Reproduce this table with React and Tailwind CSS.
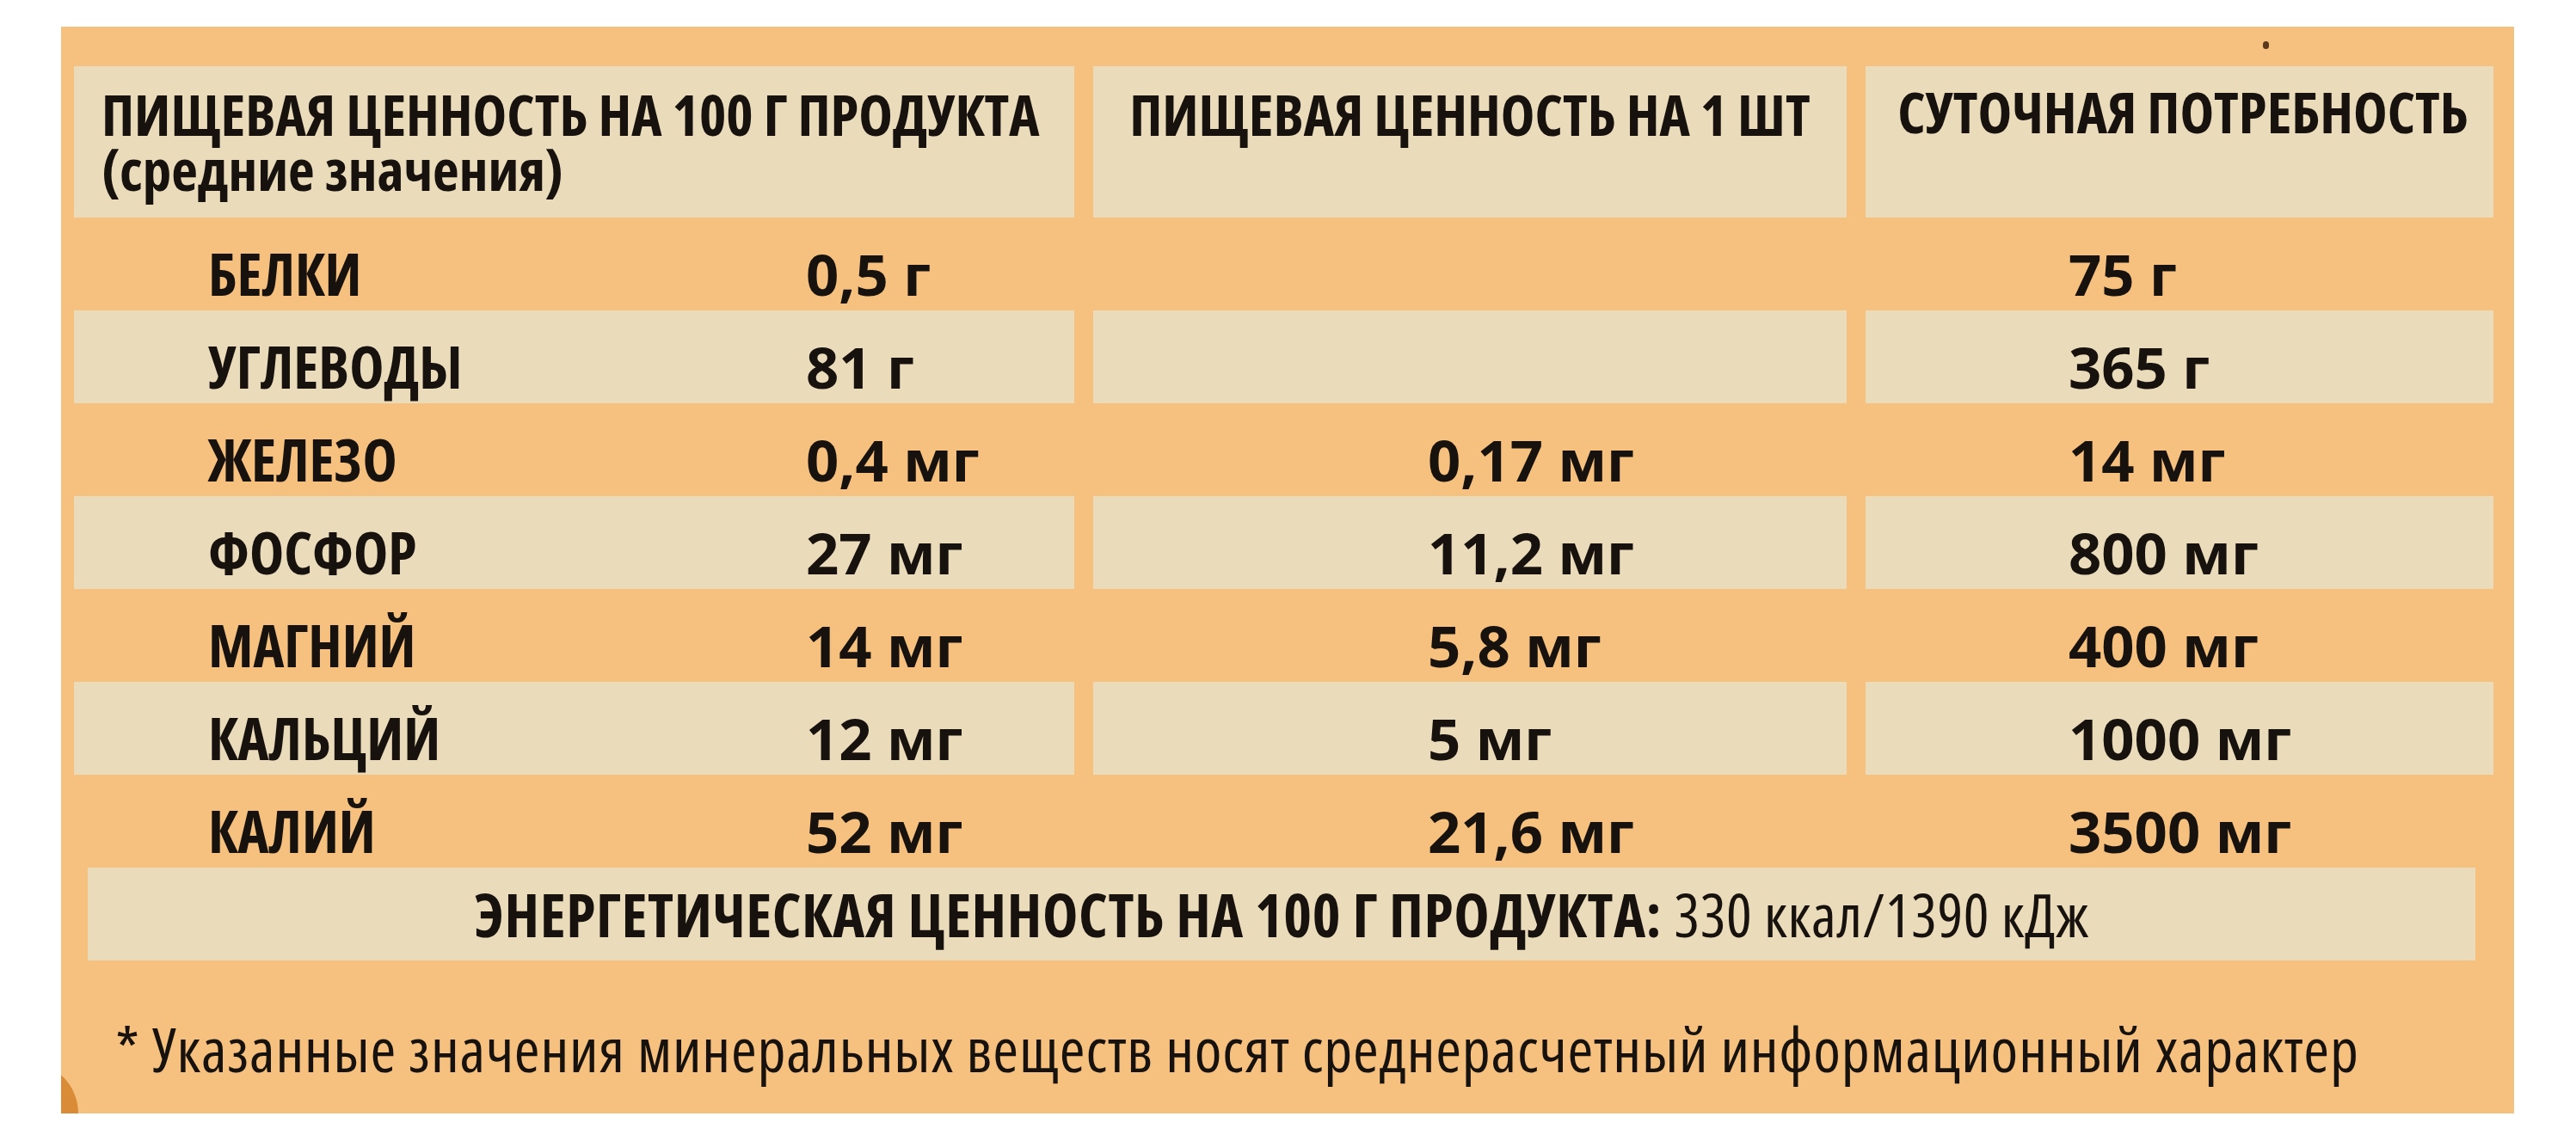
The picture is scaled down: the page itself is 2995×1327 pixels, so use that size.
const rows = [
  { name: "БЕЛКИ", per100: "0,5 г", perOne: "", daily: "75 г" },
  { name: "УГЛЕВОДЫ", per100: "81 г", perOne: "", daily: "365 г" },
  { name: "ЖЕЛЕЗО", per100: "0,4 мг", perOne: "0,17 мг", daily: "14 мг" },
  { name: "ФОСФОР", per100: "27 мг", perOne: "11,2 мг", daily: "800 мг" },
  { name: "МАГНИЙ", per100: "14 мг", perOne: "5,8 мг", daily: "400 мг" },
  { name: "КАЛЬЦИЙ", per100: "12 мг", perOne: "5 мг", daily: "1000 мг" },
  { name: "КАЛИЙ", per100: "52 мг", perOne: "21,6 мг", daily: "3500 мг" },
];

function Row({ row, light }) {
  const cell = light ? "bg-[#eadbbb]" : "";
  return (
    <>
      <div className={`${cell} h-[108px] flex items-center pt-[22px]`}>
        <span className="w-[851px] pl-[156px] font-bold font-stretch-condensed text-[68px]">{row.name}</span>
        <span className="font-bold text-[67px]">{row.per100}</span>
      </div>
      <div className={`${cell} h-[108px] flex items-center pt-[22px] pl-[389px]`}>
        <span className="font-bold text-[67px]">{row.perOne}</span>
      </div>
      <div className={`${cell} h-[108px] flex items-center pt-[22px] pl-[236px]`}>
        <span className="font-bold text-[67px]">{row.daily}</span>
      </div>
    </>
  );
}

export default function App() {
  return (
    <div className="min-h-screen bg-white pt-[31px] pl-[71px] font-['Open_Sans',_sans-serif] text-[#17120e]">
      <div className="relative w-[2852px] h-[1264px] overflow-hidden bg-[#f6c17f] pl-[15px] pt-[46px]">
        <div className="grid grid-cols-[1163px_876px_730px] gap-x-[22px]">
          {/* header */}
          <div className="h-[176px] bg-[#eadbbb] pl-[32px] pt-[23px] text-[67px] leading-[64px] font-bold font-stretch-condensed">
            <div className="h-[64px]">ПИЩЕВАЯ ЦЕННОСТЬ НА 100 Г ПРОДУКТА</div>
            <div className="h-[64px]">(средние значения)</div>
          </div>
          <div className="h-[176px] bg-[#eadbbb] pt-[23px] text-center text-[67px] leading-[64px] font-bold font-stretch-condensed">
            ПИЩЕВАЯ ЦЕННОСТЬ НА 1 ШТ
          </div>
          <div className="h-[176px] bg-[#eadbbb] pt-[20px] pl-[8px] text-center text-[67px] leading-[64px] font-bold font-stretch-condensed">
            СУТОЧНАЯ ПОТРЕБНОСТЬ
          </div>

          {rows.map((r, i) => (
            <Row key={r.name} row={r} light={i % 2 === 1} />
          ))}

          <div className="col-span-3 ml-[16px] mr-[21px] h-[108px] bg-[#eadbbb] flex items-center justify-center text-[70px] tracking-[0.6px] font-stretch-condensed">
            <span className="font-bold">ЭНЕРГЕТИЧЕСКАЯ ЦЕННОСТЬ НА 100 Г ПРОДУКТА:</span>
            <span className="ml-[14px]">330 ккал/1390 кДж</span>
          </div>
        </div>

        <div className="mt-[66px] ml-[48px] text-[72px] leading-[72px] tracking-[0.8px] font-stretch-condensed">
          * Указанные значения минеральных веществ носят среднерасчетный информационный характер
        </div>

        <div className="absolute left-[-100px] bottom-[-60px] w-[120px] h-[120px] rounded-full bg-[#d98b35]"></div>
        <div className="absolute left-[2560px] top-[17px] w-[7px] h-[9px] rounded-full bg-[#5a3a1a]"></div>
      </div>
    </div>
  );
}
